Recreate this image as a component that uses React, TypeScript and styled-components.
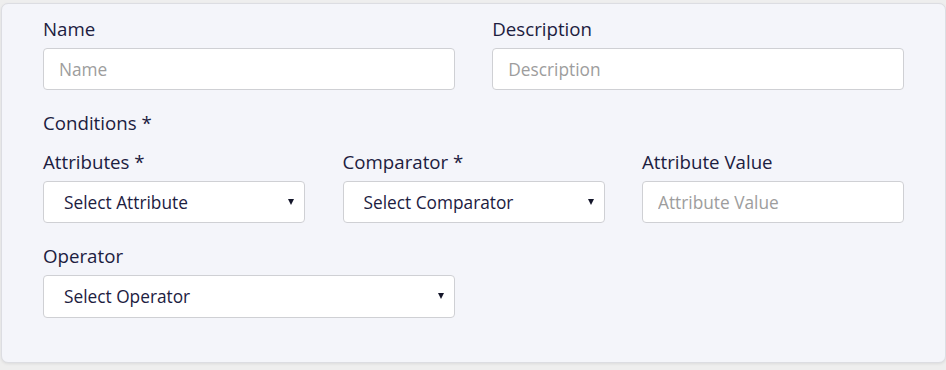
import styled, { createGlobalStyle } from "styled-components";

const GlobalStyle = createGlobalStyle`
  html, body {
    margin: 0;
    padding: 0;
    background: #eeeeee;
  }
  body {
    font-family: "Open Sans", "Liberation Sans", sans-serif;
  }
  * {
    box-sizing: border-box;
  }
`;

function App() {
  return (
    <>
      <GlobalStyle />
      <Page>
        <Card>
          <Row $cols={2}>
            <Field>
              <Label>Name</Label>
              <TextInput placeholder="Name" />
            </Field>
            <Field>
              <Label>Description</Label>
              <TextInput placeholder="Description" />
            </Field>
          </Row>
          <SectionTitle>Conditions *</SectionTitle>
          <Row $cols={3}>
            <Field>
              <Label>Attributes *</Label>
              <SelectBox>
                <Select defaultValue="">
                  <option value="">Select Attribute</option>
                </Select>
              </SelectBox>
            </Field>
            <Field>
              <Label>Comparator *</Label>
              <SelectBox>
                <Select defaultValue="">
                  <option value="">Select Comparator</option>
                </Select>
              </SelectBox>
            </Field>
            <Field>
              <Label>Attribute Value</Label>
              <TextInput placeholder="Attribute Value" />
            </Field>
          </Row>
          <Row $cols={2} $top={19}>
            <Field>
              <Label>Operator</Label>
              <SelectBox>
                <Select defaultValue="" $tall>
                  <option value="">Select Operator</option>
                </Select>
              </SelectBox>
            </Field>
          </Row>
        </Card>
      </Page>
    </>
  );
}

export default App;

const Page = styled.div`
  padding: 3px 0 0 1px;
  height: 370px;
`;

const Card = styled.div`
  background: #f4f5fa;
  border: 1px solid #dcdde2;
  border-radius: 7px;
  box-shadow: 0 1px 3px rgba(0, 0, 0, 0.08);
  padding: 11px 41px 44px 41px;
`;

const Row = styled.div<{ $cols: number; $top?: number }>`
  display: grid;
  grid-template-columns: repeat(${(p) => p.$cols}, 1fr);
  column-gap: 37.5px;
  margin-top: ${(p) => p.$top ?? 0}px;
`;

const Field = styled.div`
  display: flex;
  flex-direction: column;
`;

const Label = styled.label`
  font-size: 18.7px;
  line-height: 27px;
  color: #1c203f;
  margin-bottom: 6px;
`;

const SectionTitle = styled.div`
  font-size: 18.7px;
  line-height: 27px;
  color: #1c203f;
  margin: 19px 0 12px;
`;

const TextInput = styled.input`
  height: 42px;
  width: 100%;
  border: 1px solid #cfd0d4;
  border-radius: 4px;
  background: #ffffff;
  padding: 0 15px;
  font-family: "Open Sans", "Liberation Sans", sans-serif;
  font-size: 17.3px;
  color: #1c203f;
  outline: none;
  &::placeholder {
    color: #9d9d9d;
  }
`;

const SelectBox = styled.div`
  position: relative;
  &::after {
    content: "";
    position: absolute;
    right: 11px;
    top: 18px;
    border-left: 3px solid transparent;
    border-right: 3px solid transparent;
    border-top: 6px solid #14162a;
    pointer-events: none;
  }
`;

const Select = styled.select<{ $tall?: boolean }>`
  appearance: none;
  -webkit-appearance: none;
  height: ${(p) => (p.$tall ? 43 : 42)}px;
  width: 100%;
  border: 1px solid #cfd0d4;
  border-radius: 4px;
  background: #ffffff;
  padding: 0 30px 0 20px;
  font-family: "Open Sans", "Liberation Sans", sans-serif;
  font-size: 17.3px;
  color: #1c203f;
  outline: none;
`;
